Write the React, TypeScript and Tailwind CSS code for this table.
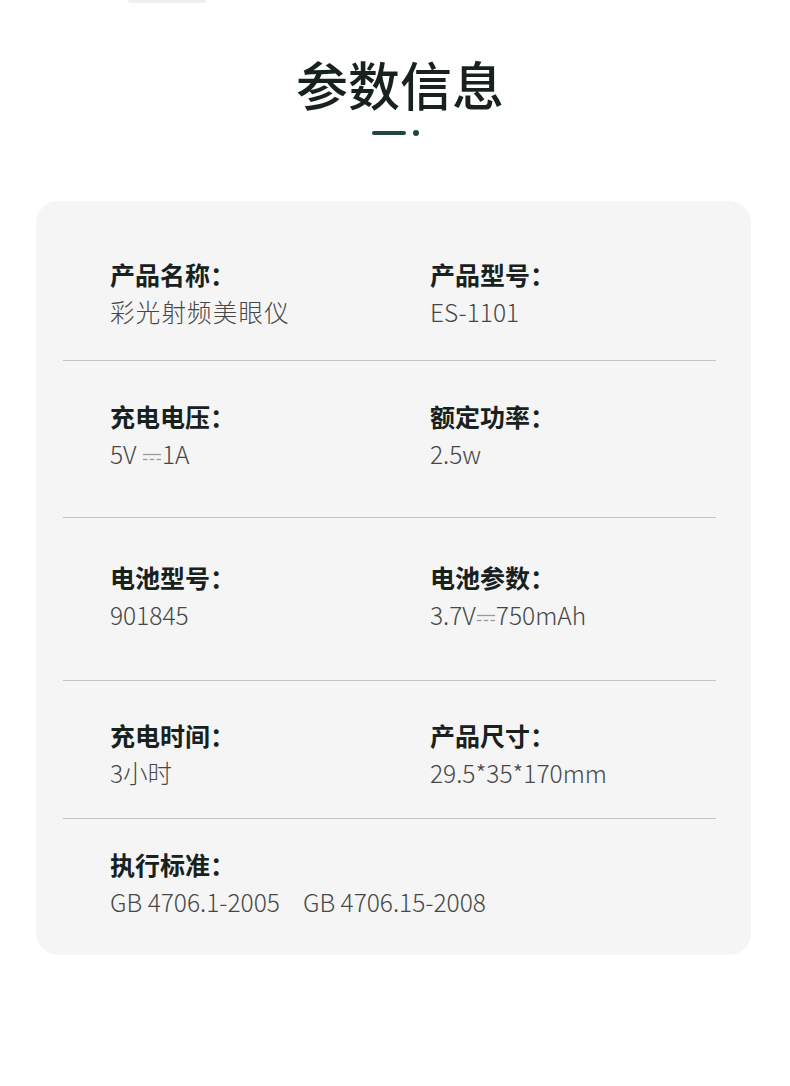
import React from "react";

interface Spec {
  label: string;
  value: React.ReactNode;
}

interface Row {
  items: Spec[];
  height: string;
  pad: string;
  last?: boolean;
}

const DC = () => (
  <svg className="inline-block mx-[1px] align-middle" width="18" height="9" viewBox="0 0 18 9">
    <line x1="0" y1="1.5" x2="18" y2="1.5" stroke="#9a9a9a" strokeWidth="1.3" />
    <line x1="0" y1="6.5" x2="4.5" y2="6.5" stroke="#9a9a9a" strokeWidth="1.3" />
    <line x1="6.75" y1="6.5" x2="11.25" y2="6.5" stroke="#9a9a9a" strokeWidth="1.3" />
    <line x1="13.5" y1="6.5" x2="18" y2="6.5" stroke="#9a9a9a" strokeWidth="1.3" />
  </svg>
);

const rows: Row[] = [
  {
    height: "h-[160px]",
    pad: "pt-[54px]",
    items: [
      { label: "产品名称：", value: <span className="tracking-[1.2px]">彩光射频美眼仪</span> },
      { label: "产品型号：", value: "ES-1101" },
    ],
  },
  {
    height: "h-[157px]",
    pad: "pt-[36px]",
    items: [
      { label: "充电电压：", value: <>5V <DC />1A</> },
      { label: "额定功率：", value: "2.5w" },
    ],
  },
  {
    height: "h-[163px]",
    pad: "pt-[40px]",
    items: [
      { label: "电池型号：", value: "901845" },
      { label: "电池参数：", value: <>3.7V<DC />750mAh</> },
    ],
  },
  {
    height: "h-[138px]",
    pad: "pt-[35px]",
    items: [
      { label: "充电时间：", value: "3小时" },
      { label: "产品尺寸：", value: "29.5*35*170mm" },
    ],
  },
  {
    height: "h-[136px]",
    pad: "pt-[26px]",
    last: true,
    items: [
      { label: "执行标准：", value: <>GB 4706.1-2005<span className="inline-block w-[23px]" />GB 4706.15-2008</> },
    ],
  },
];

const SpecCell = ({ label, value }: Spec) => (
  <div className="flex flex-col">
    <span className="text-[25px] leading-[38px] font-bold text-[#17211e] whitespace-nowrap">{label}</span>
    <span className="text-[24.5px] leading-[38px] font-light text-[#474747] whitespace-nowrap">{value}</span>
  </div>
);

export default function App() {
  return (
    <div
      className="w-[790px] h-[1086px] bg-white overflow-hidden"
      style={{ fontFamily: '"Noto Sans CJK SC", "Noto Sans", sans-serif' }}
    >
      {/* cut-off piece from the section above */}
      <div className="ml-[128px] w-[78px] h-[3px] rounded-b-md bg-[#efefef]" />

      <div className="flex flex-col items-center pt-[50px]">
        <h2 className="text-[52px] leading-[62px] font-medium text-[#17211e] pl-[10px]">参数信息</h2>
        <div className="flex items-center gap-[7px] mt-[15px]">
          <div className="w-[34px] h-[4px] rounded-full bg-[#1f4743]" />
          <div className="w-[6px] h-[6px] rounded-full bg-[#1f4743]" />
        </div>
      </div>

      <section className="ml-[36px] mt-[65px] w-[715px] rounded-[22px] bg-[#f5f5f5] pl-[27px] pr-[35px]">
        {rows.map((row, i) => (
          <div
            key={i}
            className={`${row.height} ${row.pad} box-border ${row.last ? "" : "border-b border-[#c4c4c4]"}`}
          >
            <div className="grid grid-cols-[320px_1fr] pl-[47px]">
              {row.items.map((item) => (
                <SpecCell key={item.label} label={item.label} value={item.value} />
              ))}
            </div>
          </div>
        ))}
      </section>
    </div>
  );
}
